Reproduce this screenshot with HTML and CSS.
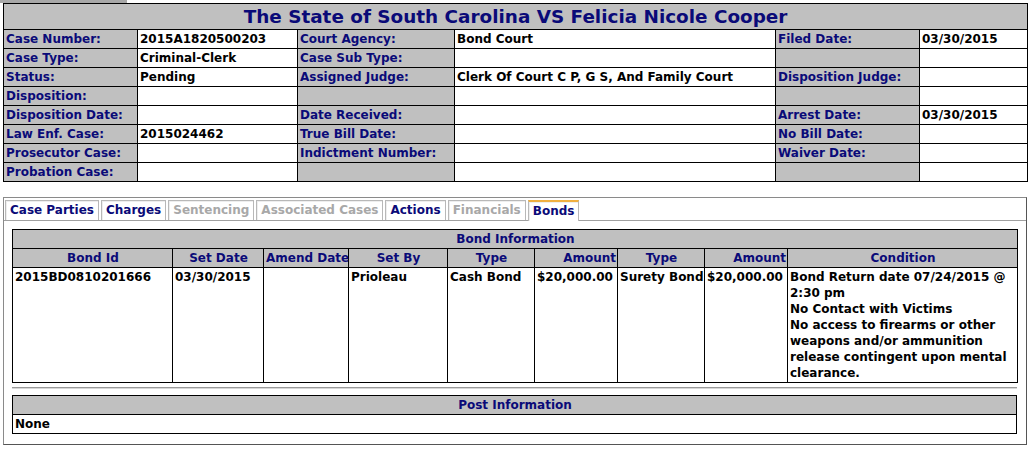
FILE: index.html
```html
<!DOCTYPE html>
<html>
<head>
<meta charset="utf-8">
<link rel="stylesheet" href="styles.css">
</head>
<body>
<div class="topstrip"></div>
<div class="page">
<table class="case">
  <colgroup>
    <col style="width:134px"><col style="width:160px"><col style="width:157px"><col style="width:321px"><col style="width:144px"><col style="width:108px">
  </colgroup>
  <tr><th colspan="6" class="title">The State of South Carolina VS Felicia Nicole Cooper</th></tr>
  <tr><td class="lbl">Case Number:</td><td>2015A1820500203</td><td class="lbl">Court Agency:</td><td>Bond Court</td><td class="lbl">Filed Date:</td><td>03/30/2015</td></tr>
  <tr><td class="lbl">Case Type:</td><td>Criminal-Clerk</td><td class="lbl">Case Sub Type:</td><td></td><td class="lbl"></td><td></td></tr>
  <tr><td class="lbl">Status:</td><td>Pending</td><td class="lbl">Assigned Judge:</td><td>Clerk Of Court C P, G S, And Family Court</td><td class="lbl">Disposition Judge:</td><td></td></tr>
  <tr><td class="lbl">Disposition:</td><td></td><td class="lbl"></td><td></td><td class="lbl"></td><td></td></tr>
  <tr><td class="lbl">Disposition Date:</td><td></td><td class="lbl">Date Received:</td><td></td><td class="lbl">Arrest Date:</td><td>03/30/2015</td></tr>
  <tr><td class="lbl">Law Enf. Case:</td><td>2015024462</td><td class="lbl">True Bill Date:</td><td></td><td class="lbl">No Bill Date:</td><td></td></tr>
  <tr><td class="lbl">Prosecutor Case:</td><td></td><td class="lbl">Indictment Number:</td><td></td><td class="lbl">Waiver Date:</td><td></td></tr>
  <tr><td class="lbl">Probation Case:</td><td></td><td class="lbl"></td><td></td><td class="lbl"></td><td></td></tr>
</table>

<div class="tabbox">
  <ul class="tabs">
    <li class="tab">Case Parties</li>
    <li class="tab">Charges</li>
    <li class="tab off">Sentencing</li>
    <li class="tab off">Associated Cases</li>
    <li class="tab">Actions</li>
    <li class="tab off">Financials</li>
    <li class="tab on">Bonds</li>
  </ul>
  <div class="panel">
    <table class="grid">
      <colgroup>
        <col style="width:160px"><col style="width:91px"><col style="width:85px"><col style="width:99px"><col style="width:87px"><col style="width:83px"><col style="width:87px"><col style="width:83px"><col style="width:230px">
      </colgroup>
      <tr><th colspan="9" class="sect">Bond Information</th></tr>
      <tr class="hdr"><th>Bond Id</th><th>Set Date</th><th>Amend Date</th><th>Set By</th><th>Type</th><th class="r">Amount</th><th>Type</th><th class="r">Amount</th><th>Condition</th></tr>
      <tr class="data"><td>2015BD0810201666</td><td>03/30/2015</td><td></td><td>Prioleau</td><td>Cash Bond</td><td>$20,000.00</td><td>Surety Bond</td><td>$20,000.00</td><td class="wrap">Bond Return date 07/24/2015 @ 2:30 pm<br>No Contact with Victims<br>No access to firearms or other weapons and/or ammunition release contingent upon mental clearance.</td></tr>
    </table>
    <div class="rule"></div>
    <table class="grid">
      <tr><th class="sect">Post Information</th></tr>
      <tr><td>None</td></tr>
    </table>
  </div>
</div>
</div>
</body>
</html>
```

FILE: styles.css
```css
html, body {
  margin: 0;
  padding: 0;
  background: #fff;
}
body {
  font-family: "DejaVu Sans", Verdana, sans-serif;
  font-weight: bold;
  font-size: 12px;
  color: #000;
}
.topstrip {
  width: 127px;
  height: 3px;
  background: #a8a8a8;
}
.page {
  padding: 0 3px 0 3px;
}
table {
  border-collapse: collapse;
  table-layout: fixed;
}
.case {
  width: 1024px;
  border: 1px solid #000;
}
.case td, .case th {
  border: 1px solid #000;
  height: 18px;
  padding: 0 2px;
  line-height: 16px;
  white-space: nowrap;
  overflow: hidden;
  text-align: left;
}
.case .title {
  background: #c0c0c0;
  color: #0a0a78;
  font-size: 18.4px;
  height: 25px;
  line-height: 24px;
  text-align: center;
  padding: 0;
}
.case .lbl {
  background: #c0c0c0;
  color: #0a0a78;
}
.tabbox {
  margin-top: 15px;
  width: 1022px;
  border: 1px solid #8a8a8a;
  border-right-color: #555;
  border-bottom-color: #555;
  height: 246px;
}
.tabs {
  list-style: none;
  margin: 0;
  padding: 2px 0 0 1px;
  display: flex;
  gap: 2px;
  border-bottom: 1px solid #a0a0a0;
  height: 20px;
}
.tab {
  border: 1px solid #b8b8b8;
  border-bottom: none;
  padding: 0 4px;
  line-height: 19px;
  color: #0a0a78;
  background: #fff;
  box-shadow: inset 1px 1px 0 #eee;
}
.tab.off {
  color: #a8a8a8;
}
.tab.on {
  border-top: 2px solid #f0b040;
  line-height: 18px;
  height: 19px;
  margin-bottom: -1px;
  position: relative;
}
.panel {
  padding: 8px 9px 0 8px;
}
.grid {
  width: 1005px;
  border: 1px solid #000;
}
.grid th, .grid td {
  border: 1px solid #000;
  padding: 1px 1px 1px 2px;
  line-height: 16px;
  vertical-align: top;
  white-space: nowrap;
}
.grid th {
  background: #c0c0c0;
  color: #0a0a78;
  text-align: center;
}
.grid th.r {
  text-align: right;
}
.grid td {
  text-align: left;
}
.grid td.wrap {
  white-space: normal;
}
.grid tr.data td {
  height: 112px;
}
.rule {
  height: 0;
  border-top: 1px solid #9a9a9a;
  border-bottom: 1px solid #d8d8d8;
  margin: 4px 0 6px;
}
```
